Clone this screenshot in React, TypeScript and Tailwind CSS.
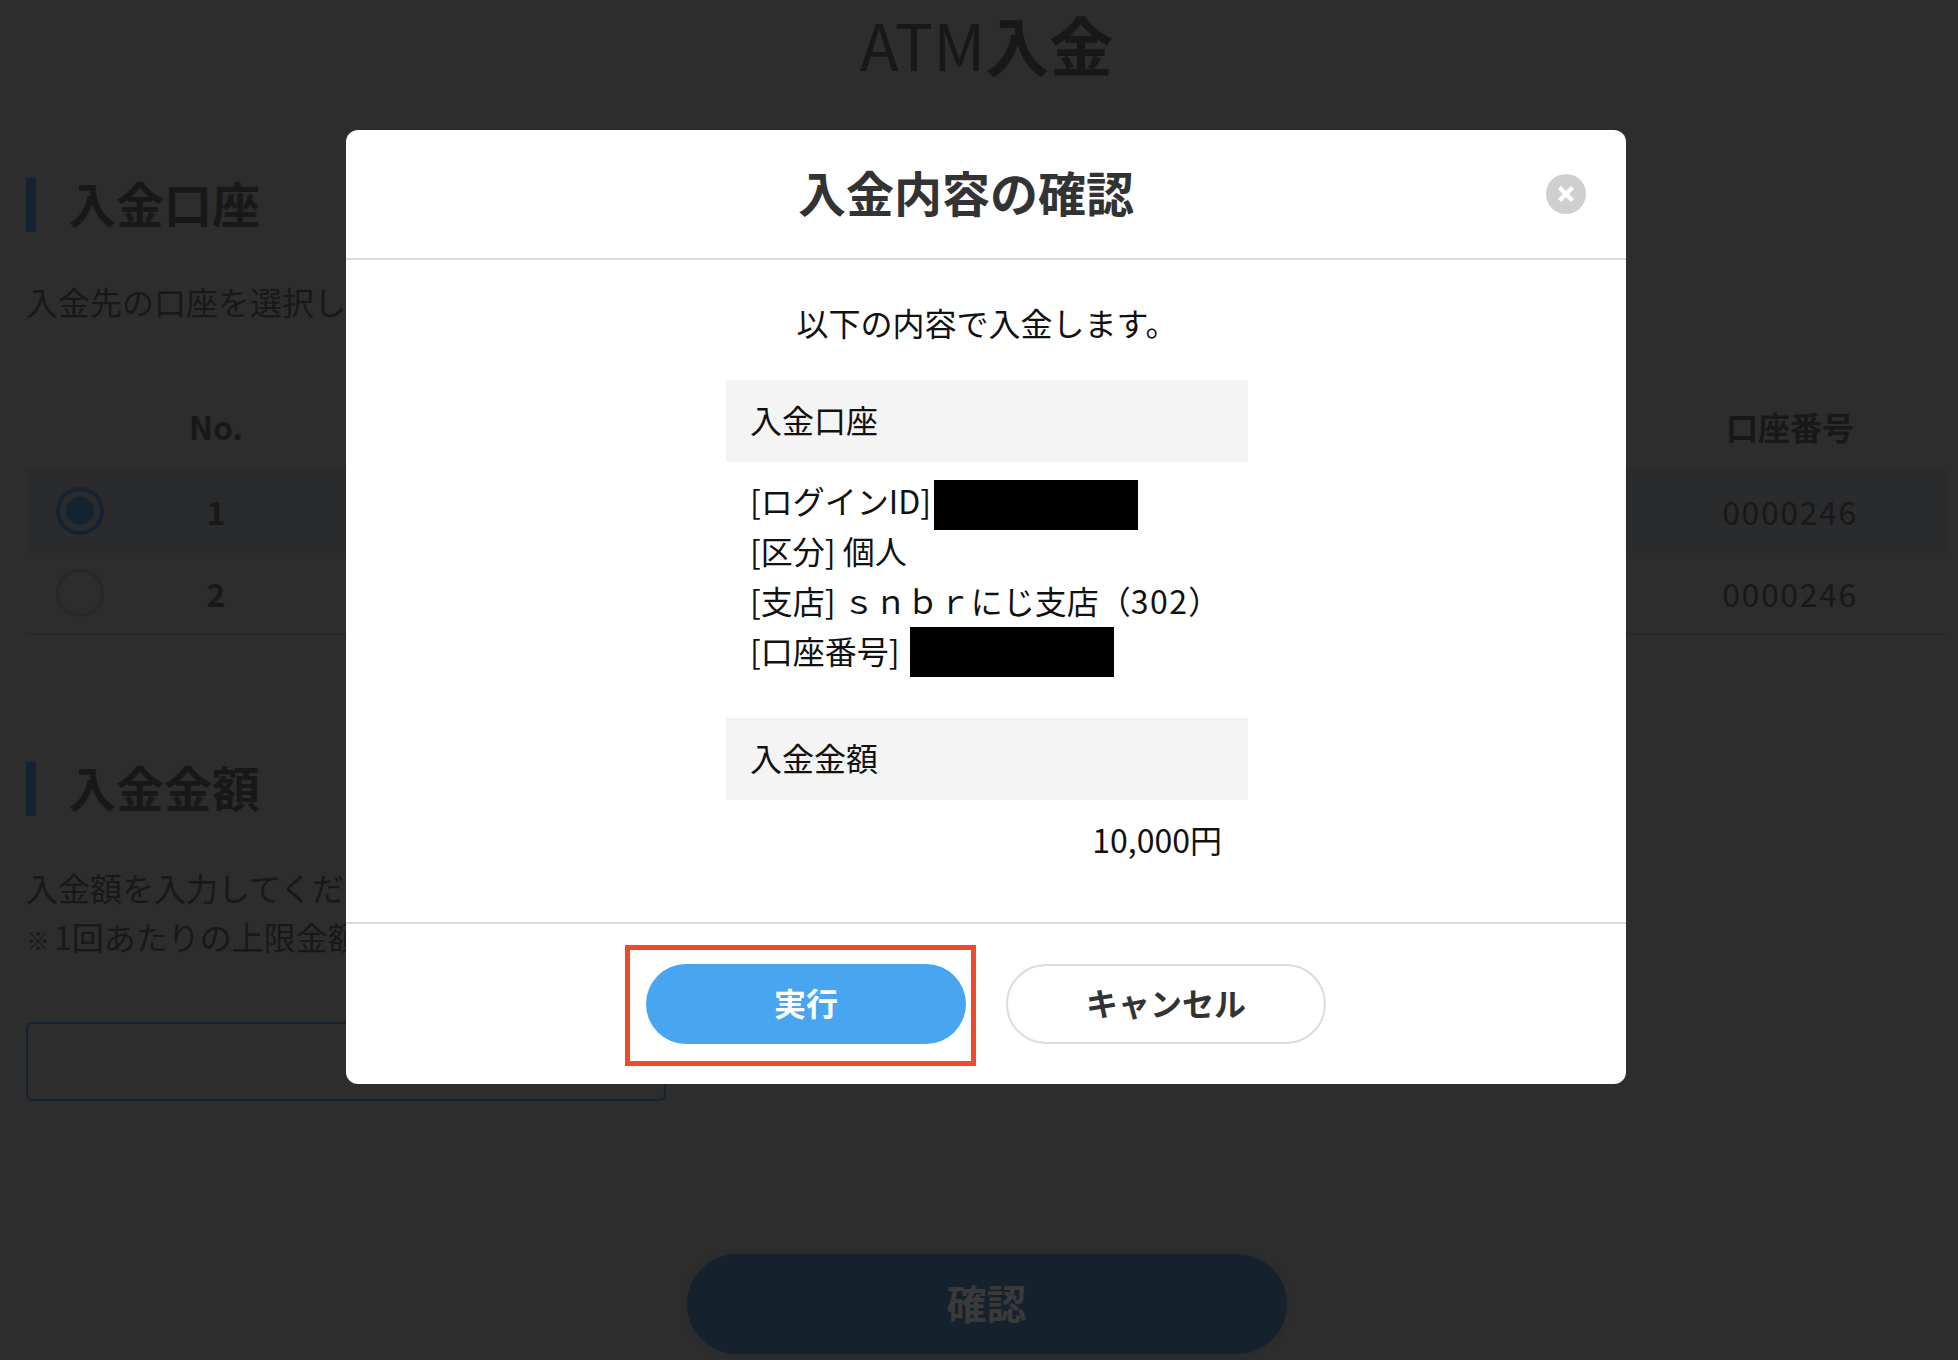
export default function App() {
  return (
    <div className="relative h-[1360px] w-full overflow-hidden bg-[#2d2d2d] font-['Noto_Sans_CJK_JP','Noto_Sans',sans-serif] text-[32px] text-[#181818]">
      {/* dimmed page */}
      <div className="flex flex-col pl-[26px] pr-[11px]">
        <h1 className="mt-[1px] text-center text-[64px] leading-[84px] text-[#181818]">
          ATM<span className="font-bold">入金</span>
        </h1>
        <section className="mt-[93px] flex h-[54px] items-center border-l-[10px] border-[#15222f] pl-[32px]">
          <h2 className="mb-[6px] text-[48px] font-bold leading-[54px] text-[#181818]">入金口座</h2>
        </section>
        <p className="mt-[44px] h-[50px] leading-[50px]">入金先の口座を選択してください。</p>
        <div className="mt-[74px] flex h-[52px] items-center text-center font-bold">
          <div className="w-[108px]" />
          <div className="w-[164px]">No.</div>
          <div className="flex-1" />
          <div className="w-[314px]">口座番号</div>
        </div>
        <div className="mt-[16px] flex h-[85px] items-center border-y-2 border-[#292a2b] bg-[#2a2b2c] text-center">
          <div className="flex w-[108px] justify-center">
            <span className="flex h-[48px] w-[48px] items-center justify-center rounded-full border-[4px] border-[#15222f]">
              <span className="h-[28px] w-[28px] rounded-full bg-[#15222f]" />
            </span>
          </div>
          <div className="w-[164px] font-bold">1</div>
          <div className="flex-1" />
          <div className="w-[314px] tracking-[1.6px]">0000246</div>
        </div>
        <div className="flex h-[82px] items-center border-b-2 border-[#292929] text-center">
          <div className="flex w-[108px] justify-center">
            <span className="h-[48px] w-[48px] rounded-full border-[3px] border-[#282828]" />
          </div>
          <div className="w-[164px] font-bold">2</div>
          <div className="flex-1" />
          <div className="w-[314px] tracking-[1.6px]">0000246</div>
        </div>
        <section className="mt-[127px] flex h-[54px] items-center border-l-[10px] border-[#15222f] pl-[32px]">
          <h2 className="mb-[6px] text-[48px] font-bold leading-[54px] text-[#181818]">入金金額</h2>
        </section>
        <p className="mt-[46px] h-[50px] leading-[50px]">入金額を入力してください。</p>
        <p className="mt-[-1px] h-[50px] leading-[50px]">
          <span className="mr-[4px] text-[24px] font-bold">※</span>1回あたりの上限金額は
        </p>
        <div className="mt-[61px] flex items-center gap-[19px]">
          <div className="h-[79px] w-[640px] rounded-[6px] border-2 border-[#15222f]" />
          <span>円</span>
        </div>
        <div className="mt-[153px] flex justify-center">
          <button className="h-[100px] w-[600px] rounded-full bg-[#15212c] pb-[4px] text-[40px] font-bold text-[#3a3a3a] shadow-[0_0_0_5px_#2a2c2d]">
            確認
          </button>
        </div>
      </div>

      {/* modal */}
      <div className="absolute left-[346px] top-[130px] flex h-[954px] w-[1280px] flex-col rounded-[12px] bg-white text-[#111]">
        <header className="relative flex h-[130px] items-center justify-center border-b-2 border-[#dcdcdc] pb-[6px] pr-[40px]">
          <h2 className="text-[48px] font-bold text-[#333]">入金内容の確認</h2>
          <span className="absolute right-[40px] top-[44px] flex h-[40px] w-[40px] items-center justify-center rounded-full bg-[#cfcfcf]">
            <svg viewBox="0 0 20 20" className="h-[20px] w-[20px]" fill="none" stroke="#fff" strokeWidth="4.4">
              <path d="M3.5 3.5 L16.5 16.5 M16.5 3.5 L3.5 16.5" />
            </svg>
          </span>
        </header>
        <div className="flex flex-1 flex-col items-center">
          <p className="mt-[37px] h-[50px] pl-[2px] text-center leading-[50px]">以下の内容で入金します。</p>
          <div className="ml-[2px] mt-[33px] w-[522px]">
            <div className="flex h-[82px] items-center bg-[#f4f4f4] px-[24px] pb-[4px]">入金口座</div>
            <div className="flex flex-col px-[24px] pb-[18px] pt-[13px] leading-[50px]">
              <div className="flex h-[50px] items-center">
                [ログインID]
                <span className="ml-[3px] mt-[9px] inline-block h-[50px] w-[204px] bg-black" />
              </div>
              <div className="h-[50px]">[区分] 個人</div>
              <div className="h-[50px]">[支店] ｓｎｂｒにじ支店（<span className="tracking-[1.4px]">302</span>）</div>
              <div className="flex h-[50px] items-center">
                [口座番号]
                <span className="ml-[10px] mt-[4px] inline-block h-[50px] w-[204px] bg-black" />
              </div>
            </div>
            <div className="mt-[25px] flex h-[82px] items-center bg-[#f4f4f4] px-[24px] pb-[4px]">入金金額</div>
            <div className="mt-[14px] h-[50px] px-[26px] text-right leading-[50px]">10,000円</div>
          </div>
        </div>
        <footer className="flex h-[162px] items-center justify-center gap-[40px] border-t-2 border-[#dcdcdc] pb-[1px]">
          <div className="relative">
            <button className="h-[80px] w-[320px] rounded-full bg-[#48a6f0] pb-[3px] text-[32px] font-bold text-white">実行</button>
            <span className="absolute left-[-21px] top-[-19px] h-[121px] w-[351px] border-[5px] border-[#f04a2c]" />
          </div>
          <button className="h-[80px] w-[320px] rounded-full border-2 border-[#dcdcdc] bg-white pb-[3px] text-[32px] font-bold text-[#333]">キャンセル</button>
        </footer>
      </div>
    </div>
  );
}
